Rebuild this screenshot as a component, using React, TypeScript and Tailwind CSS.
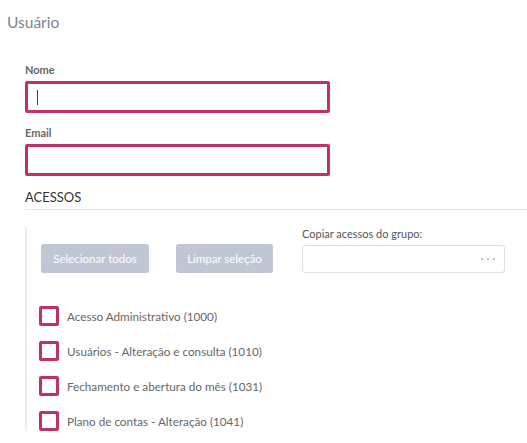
const acessos = [
  "Acesso Administrativo (1000)",
  "Usuários - Alteração e consulta (1010)",
  "Fechamento e abertura do mês (1031)",
  "Plano de contas - Alteração (1041)",
];

function Field({ label, cursor }: { label: string; cursor?: boolean }) {
  return (
    <div className="flex flex-col">
      <label className="text-[11px] font-bold leading-[14px] text-[#666]">{label}</label>
      <div className="mt-[4px] flex h-[32px] w-[305px] items-center rounded-[2px] border-[3px] border-[#c2306b] bg-white px-[9px]">
        {cursor && <span className="h-[15px] w-px bg-[#444]" />}
      </div>
    </div>
  );
}

export default function App() {
  return (
    <div className="h-[443px] w-[527px] overflow-hidden bg-white font-['Lato',sans-serif]">
      <h1 className="pl-[7px] pt-[12px] text-[15.5px] leading-[20px] text-[#7a8494]">Usuário</h1>

      <div className="pl-[25px] pt-[31px]">
        <div className="flex flex-col gap-[13px]">
          <Field label="Nome" cursor />
          <Field label="Email" />
        </div>

        <div className="mt-[13px] border-b border-[#e3e3e3] pb-[3px] text-[13px] leading-[17px] text-[#333]">
          ACESSOS
        </div>

        <div className="mt-[17px] border-l-2 border-[#ececec] pl-[14px]">
          <div className="flex items-end">
            <button className="h-[29px] w-[108px] rounded-[3px] bg-[#c0c6d3] text-[11.5px] text-white">
              Selecionar todos
            </button>
            <button className="ml-[27px] h-[29px] w-[97px] rounded-[3px] bg-[#c0c6d3] text-[11.5px] text-white">
              Limpar seleção
            </button>
            <div className="ml-[29px] flex flex-col">
              <span className="text-[11px] leading-[14px] text-[#555]">Copiar acessos do grupo:</span>
              <div className="mt-[4px] flex h-[28px] w-[203px] items-center justify-end gap-[4px] rounded-[3px] border border-[#dedede] pr-[9px]">
                <span className="h-[2px] w-[2px] rounded-full bg-[#aaa]" />
                <span className="h-[2px] w-[2px] rounded-full bg-[#aaa]" />
                <span className="h-[2px] w-[2px] rounded-full bg-[#aaa]" />
              </div>
            </div>
          </div>

          <ul className="mt-[33px] flex flex-col gap-[15px]">
            {acessos.map((a) => (
              <li key={a} className="-ml-[2px] flex items-center">
                <span className="h-[20px] w-[20px] rounded-[2px] border-[3px] border-[#c2306b] bg-white" />
                <span className="ml-[8px] text-[11.7px] leading-[20px] text-[#666]">{a}</span>
              </li>
            ))}
          </ul>
        </div>
      </div>
    </div>
  );
}
